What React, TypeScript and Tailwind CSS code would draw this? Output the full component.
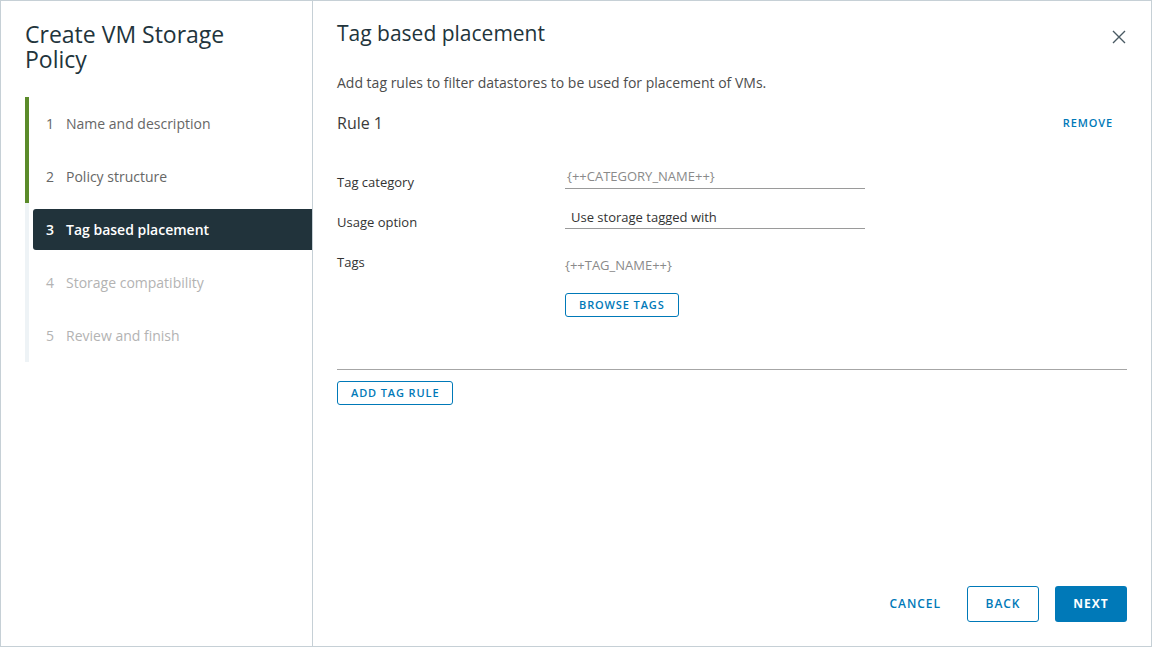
import React from "react";

const steps = [
  { n: 1, label: "Name and description", state: "done" },
  { n: 2, label: "Policy structure", state: "done" },
  { n: 3, label: "Tag based placement", state: "active" },
  { n: 4, label: "Storage compatibility", state: "todo" },
  { n: 5, label: "Review and finish", state: "todo" },
];

const StepNav: React.FC = () => (
  <div className="ml-[24px] mt-[25px] flex flex-col">
    {steps.map((s) => (
      <div key={s.n} className="flex h-[53px]">
        <div className={`w-[4px] ${s.state === "done" ? "bg-[#5b8b2a]" : "bg-[#eef3f6]"}`}></div>
        {s.state === "active" ? (
          <div className="ml-[4px] my-[6px] flex flex-1 items-center rounded-l-[3px] bg-[#21333b] pl-[13px] text-[14px] font-semibold text-white">
            <span className="w-[20px]">{s.n}</span>
            <span>{s.label}</span>
          </div>
        ) : (
          <div
            className={`ml-[4px] flex flex-1 items-center pl-[13px] text-[14px] ${
              s.state === "done" ? "text-[#666666]" : "text-[#b3b3b3]"
            }`}
          >
            <span className="w-[20px]">{s.n}</span>
            <span>{s.label}</span>
          </div>
        )}
      </div>
    ))}
  </div>
);

const OutlineButton: React.FC<{ children: React.ReactNode; className?: string }> = ({ children, className = "" }) => (
  <button
    className={`h-[24px] rounded-[3px] border border-[#0079b8] px-[13px] text-[11px] font-semibold tracking-[0.08em] text-[#0079b8] ${className}`}
  >
    {children}
  </button>
);

export default function App() {
  return (
    <div
      className="flex h-[647px] w-[1152px] border border-[#c6d0d6] bg-white text-[#313131]"
      style={{ fontFamily: "'Open Sans', Lato, sans-serif" }}
    >
      {/* wizard steps */}
      <div className="w-[312px] shrink-0 border-r border-[#c6d0d6]">
        <h1 className="w-[250px] px-[24px] pt-[21px] text-[23px] leading-[25px] text-[#22343c]">
          Create VM Storage Policy
        </h1>
        <StepNav />
      </div>

      {/* content */}
      <div className="flex flex-1 flex-col px-[24px]">
        <div className="flex items-center justify-between pt-[19px]">
          <h2 className="text-[21px] leading-[26px] text-[#22343c]">Tag based placement</h2>
          <svg width="14" height="14" viewBox="0 0 14 14" className="mr-[1px] mt-[8px] text-[#4a5a63]">
            <path d="M1 1 L13 13 M13 1 L1 13" stroke="currentColor" strokeWidth="1.4" fill="none" />
          </svg>
        </div>

        <p className="mt-[27px] text-[14px] leading-[20px] text-[#4d4d4d]">
          Add tag rules to filter datastores to be used for placement of VMs.
        </p>

        <div className="mt-[19px] flex items-center justify-between">
          <span className="text-[16px] leading-[22px] text-[#3a3a3a]">Rule 1</span>
          <span className="mr-[14px] text-[11px] font-semibold tracking-[0.08em] text-[#0079b8]">REMOVE</span>
        </div>

        <div className="mt-[29px] flex flex-col">
          <div className="flex h-[40px]">
            <div className="w-[228px] pt-[10px] text-[13px] text-[#333]">Tag category</div>
            <div className="h-[26px] w-[300px] border-b border-[#9a9a9a] pl-[2px] pt-[3px] text-[13px] leading-[20px] text-[#8a8a8a]">
              {"{++CATEGORY_NAME++}"}
            </div>
          </div>
          <div className="flex h-[40px]">
            <div className="w-[228px] pt-[10px] text-[13px] text-[#333]">Usage option</div>
            <div className="h-[26px] w-[300px] border-b border-[#9a9a9a] pl-[6px] pt-[4px] text-[13px] leading-[20px] text-[#333]">
              Use storage tagged with
            </div>
          </div>
          <div className="flex">
            <div className="w-[228px] pt-[10px] text-[13px] text-[#333]">Tags</div>
            <div className="flex flex-col items-start">
              <div className="pt-[12px] text-[13px] leading-[20px] text-[#8a8a8a]">{"{++TAG_NAME++}"}</div>
              <OutlineButton className="mt-[18px]">BROWSE TAGS</OutlineButton>
            </div>
          </div>
        </div>

        <div className="mt-[52px] h-px bg-[#a6a6a6]"></div>
        <div className="mt-[9px]">
          <OutlineButton>ADD TAG RULE</OutlineButton>
        </div>

        <div className="mt-auto mb-[24px] flex items-center justify-end">
          <button className="h-[36px] px-[12px] text-[12px] font-semibold tracking-[0.08em] text-[#0079b8]">CANCEL</button>
          <button className="ml-[14px] h-[36px] w-[72px] rounded-[3px] border border-[#0079b8] text-[12px] font-semibold tracking-[0.08em] text-[#0079b8]">
            BACK
          </button>
          <button className="ml-[16px] h-[36px] w-[72px] rounded-[3px] bg-[#0079b8] text-[12px] font-bold tracking-[0.08em] text-white">
            NEXT
          </button>
        </div>
      </div>
    </div>
  );
}
